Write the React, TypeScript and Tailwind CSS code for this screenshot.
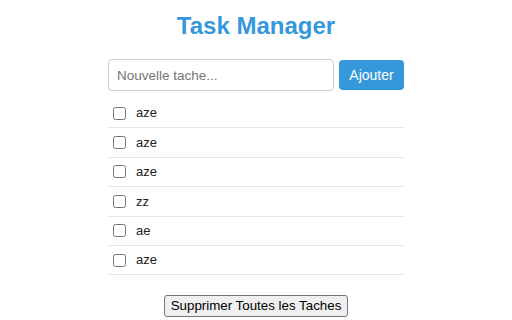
import { useState } from 'react';

type Task = { id: number; text: string; done: boolean };

export default function App() {
  const [tasks, setTasks] = useState<Task[]>([
    { id: 1, text: 'aze', done: false },
    { id: 2, text: 'aze', done: false },
    { id: 3, text: 'aze', done: false },
    { id: 4, text: 'zz', done: false },
    { id: 5, text: 'ae', done: false },
    { id: 6, text: 'aze', done: false }
  ]);
  const [newTask, setNewTask] = useState('');

  const addTask = () => {
    if (!newTask.trim()) return;
    setTasks([...tasks, { id: Date.now(), text: newTask.trim(), done: false }]);
    setNewTask('');
  };

  const toggleTask = (id: number) => {
    setTasks(tasks.map((t) => (t.id === id ? { ...t, done: !t.done } : t)));
  };

  return (
    <div className="min-h-[320px] bg-white font-['Liberation_Sans',Arial,sans-serif] text-[#222]">
      <div className="w-[296px] mx-auto pt-[12px]">
        <h1 className="text-center text-[24px] leading-[28px] font-bold text-[#3498db]">
          Task Manager
        </h1>

        <div className="flex items-center gap-[5px] mt-[19px]">
          <input
            type="text"
            value={newTask}
            onChange={(e) => setNewTask(e.target.value)}
            placeholder="Nouvelle tache..."
            className="flex-1 min-w-0 h-[32px] border border-[#ccc] rounded-[4px] px-[8px] text-[13.5px] outline-none placeholder:text-[#757575]"
          />
          <button
            onClick={addTask}
            className="w-[65px] h-[30px] bg-[#3498db] text-white text-[14px] rounded-[4px]"
          >
            Ajouter
          </button>
        </div>

        <ul className="mt-[8px]">
          {tasks.map((task) => (
            <li
              key={task.id}
              className="flex items-center h-[29.4px] border-b border-[#e6e6e6]"
            >
              <input
                type="checkbox"
                checked={task.done}
                onChange={() => toggleTask(task.id)}
                className="m-0 ml-[5px] w-[13px] h-[13px]"
              />
              <span className={`ml-[10px] text-[13px] ${task.done ? 'line-through text-gray-400' : ''}`}>
                {task.text}
              </span>
            </li>
          ))}
        </ul>

        <div className="flex justify-center mt-[20px]">
          <button
            onClick={() => setTasks([])}
            className="h-[22px] px-[6px] bg-[#efefef] border border-[#767676] rounded-[3px] text-[13.33px] text-black"
          >
            Supprimer Toutes les Taches
          </button>
        </div>
      </div>
    </div>
  );
}
